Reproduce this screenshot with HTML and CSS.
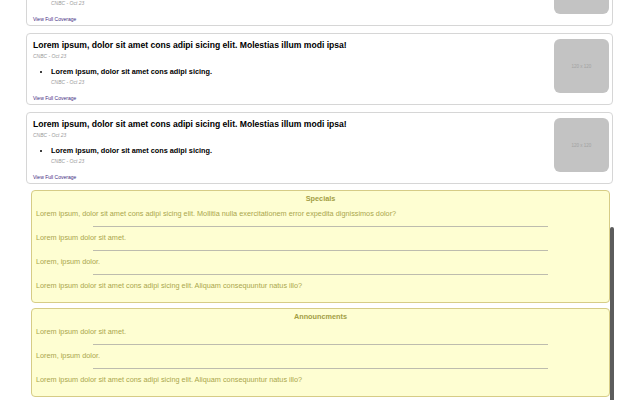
FILE: index.html
```html
<!DOCTYPE html>
<html>
<head>
<meta charset="utf-8">
<link rel="stylesheet" href="styles.css">
</head>
<body>
<main class="feed">
  <article class="card card-first">
    <div class="card-body">
      <h2 class="card-title">Lorem ipsum, dolor sit amet cons adipi sicing elit. Molestias illum modi ipsa!</h2>
      <p class="meta">CNBC - Oct 23</p>
      <ul class="related">
        <li><span class="related-title">Lorem ipsum, dolor sit amet cons adipi sicing.</span><p class="meta">CNBC - Oct 23</p></li>
      </ul>
      <a class="coverage" href="#">View Full Coverage</a>
    </div>
    <div class="thumb">120 x 120</div>
  </article>
  <article class="card">
    <div class="card-body">
      <h2 class="card-title">Lorem ipsum, dolor sit amet cons adipi sicing elit. Molestias illum modi ipsa!</h2>
      <p class="meta">CNBC - Oct 23</p>
      <ul class="related">
        <li><span class="related-title">Lorem ipsum, dolor sit amet cons adipi sicing.</span><p class="meta">CNBC - Oct 23</p></li>
      </ul>
      <a class="coverage" href="#">View Full Coverage</a>
    </div>
    <div class="thumb">120 x 120</div>
  </article>
  <article class="card">
    <div class="card-body">
      <h2 class="card-title">Lorem ipsum, dolor sit amet cons adipi sicing elit. Molestias illum modi ipsa!</h2>
      <p class="meta">CNBC - Oct 23</p>
      <ul class="related">
        <li><span class="related-title">Lorem ipsum, dolor sit amet cons adipi sicing.</span><p class="meta">CNBC - Oct 23</p></li>
      </ul>
      <a class="coverage" href="#">View Full Coverage</a>
    </div>
    <div class="thumb">120 x 120</div>
  </article>

  <section class="notice">
    <h3 class="notice-title">Specials</h3>
    <p class="notice-item">Lorem ipsum, dolor sit amet cons adipi sicing elit. Mollitia nulla exercitationem error expedita dignissimos dolor?</p>
    <hr class="sep">
    <p class="notice-item">Lorem ipsum dolor sit amet.</p>
    <hr class="sep">
    <p class="notice-item">Lorem, ipsum dolor.</p>
    <hr class="sep">
    <p class="notice-item">Lorem ipsum dolor sit amet cons adipi sicing elit. Aliquam consequuntur natus illo?</p>
  </section>

  <section class="notice">
    <h3 class="notice-title">Announcments</h3>
    <p class="notice-item">Lorem ipsum dolor sit amet.</p>
    <hr class="sep">
    <p class="notice-item">Lorem, ipsum dolor.</p>
    <hr class="sep">
    <p class="notice-item">Lorem ipsum dolor sit amet cons adipi sicing elit. Aliquam consequuntur natus illo?</p>
  </section>
  <article class="card card-next"></article>
</main>
<div class="scroll-thumb"></div>
</body>
</html>
```

FILE: styles.css
```css
* { box-sizing: border-box; }
html, body { margin: 0; padding: 0; }
body {
  background: #ffffff;
  font-family: "Liberation Sans", Arial, sans-serif;
  color: #000;
  overflow: hidden;
  height: 400px;
  position: relative;
}
.feed {
  width: 587px;
  margin-left: 26px;
  display: flex;
  flex-direction: column;
  gap: 7px;
}
.card {
  display: flex;
  align-items: flex-start;
  border: 1px solid #d6d6d6;
  border-radius: 4px;
  background: #fff;
  padding: 6px 3px 2px 6px;
}
.card-first { margin-top: -46px; }
.card-body { flex: 1; min-width: 0; }
.card-title {
  margin: 0;
  font-size: 8.6px;
  line-height: 11px;
  font-weight: bold;
}
.meta {
  margin: 2px 0 0;
  font-size: 5px;
  line-height: 7px;
  font-style: italic;
  color: #9a9a9a;
}
.related {
  margin: 7px 0 0;
  padding-left: 18px;
  list-style: disc;
}
.related li { font-size: 7.3px; }
.related-title {
  display: block;
  font-size: 7.3px;
  line-height: 10px;
  font-weight: bold;
}
.related .meta { margin-top: 2px; }
.coverage {
  display: block;
  margin-top: 9px;
  font-size: 5px;
  line-height: 7px;
  color: #3f2a7f;
  text-decoration: none;
}
.thumb {
  width: 55px;
  height: 54px;
  margin-top: -1px;
  flex: none;
  background: #c3c3c3;
  border-radius: 6px;
  display: flex;
  align-items: center;
  justify-content: center;
  font-size: 4.5px;
  color: #a2a2a2;
}
.notice {
  margin: 0 3px 0 5px;
  background: #fefed2;
  border: 1px solid #d6cc86;
  border-radius: 4px;
  padding: 3px 4px 11px;
}
.card + .notice { margin-top: -1px; }
.notice + .notice { margin-top: -2px; }
.notice-title {
  margin: 0 0 5px;
  text-align: center;
  font-size: 7.3px;
  line-height: 10px;
  font-weight: bold;
  color: #a39f45;
}
.notice-item {
  margin: 0;
  font-size: 7.3px;
  line-height: 10px;
  color: #aaa64c;
}
.sep {
  width: 80%;
  margin: 7px auto 6px;
  border: 0;
  border-top: 1px solid #bdbcae;
  height: 0;
}
.card-next { height: 30px; padding: 0; }
.scroll-thumb {
  position: absolute;
  left: 610px;
  top: 227px;
  width: 4px;
  height: 180px;
  background: #5c5c5c;
  border-radius: 2px;
}
```
